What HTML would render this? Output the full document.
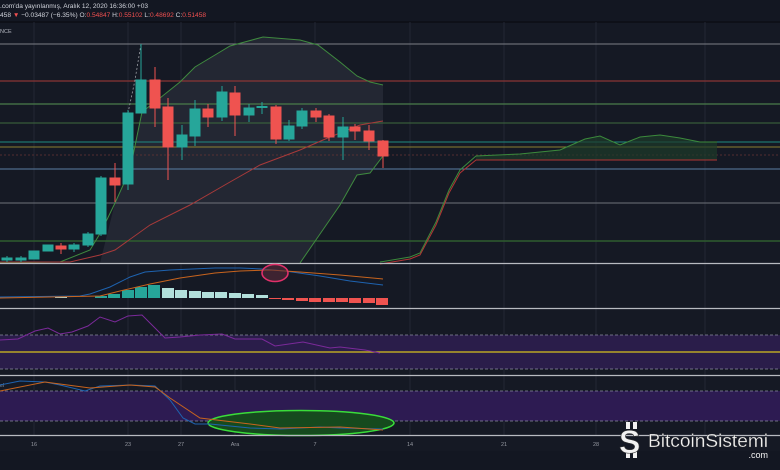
<!DOCTYPE html>
<html><head><meta charset="utf-8"><style>
html,body{margin:0;padding:0;background:#151924;}
body{width:780px;height:470px;overflow:hidden;position:relative;font-family:"Liberation Sans","Noto Sans CJK JP",sans-serif;}
svg{position:absolute;left:0;top:0}
</style></head><body>
<svg width="780" height="470" viewBox="0 0 780 470" xmlns="http://www.w3.org/2000/svg" font-family="Liberation Sans, sans-serif">
<rect width="780" height="470" fill="#151924"/>
<rect width="780" height="22" fill="#131722"/>
<line x1="0" y1="22" x2="780" y2="22" fill="none" stroke="#0c0e14" stroke-width="1.5"/>
<text x="0" y="8" font-size="6.6" fill="#d1d4dc">.com'da yayınlanmış, Aralık 12, 2020 16:36:00 +03</text>
<text x="0" y="17" font-size="6.6" fill="#d1d4dc">458 <tspan fill="#f05050">▼</tspan> −0.03487 (−6.35%) O:<tspan fill="#f05050">0.54847</tspan> H:<tspan fill="#f05050">0.55102</tspan> L:<tspan fill="#f05050">0.48692</tspan> C:<tspan fill="#f05050">0.51458</tspan></text>
<text x="0" y="33" font-size="5.5" fill="#b2b5be">NCE</text>
<g stroke="#222633" stroke-width="1">
<line x1="34" y1="22" x2="34" y2="436"/><line x1="128" y1="22" x2="128" y2="436"/><line x1="181" y1="22" x2="181" y2="436"/><line x1="235" y1="22" x2="235" y2="436"/><line x1="315" y1="22" x2="315" y2="436"/><line x1="410" y1="22" x2="410" y2="436"/><line x1="504" y1="22" x2="504" y2="436"/><line x1="596" y1="22" x2="596" y2="436"/><line x1="705" y1="22" x2="705" y2="436"/>
</g>
<path d="M142,112 L160,98 L180,82 L195,67 L215,55 L230,46 L263,37 L300,40 L318,45 L340,62 L357,76 L370,82 L383,85 L383,156 L370,173 L357,175 L340,205 L320,234 L300,263 L100,263 L115,203 L130,170 Z" fill="#232733"/>
<line x1="0" y1="44" x2="780" y2="44" stroke="#7d7f86" stroke-width="1"/>
<line x1="0" y1="81" x2="780" y2="81" stroke="#8a3535" stroke-width="1.2"/>
<line x1="0" y1="104" x2="780" y2="104" stroke="#4a7d4a" stroke-width="1.2"/>
<line x1="0" y1="123" x2="780" y2="123" stroke="#3e6b3e" stroke-width="1"/>
<line x1="0" y1="142" x2="780" y2="142" stroke="#1f8a80" stroke-width="1"/>
<line x1="0" y1="147" x2="780" y2="147" stroke="#8c8030" stroke-width="1"/>
<line x1="0" y1="155" x2="780" y2="155" stroke="#6a3535" stroke-width="0.8" stroke-dasharray="2,2"/>
<line x1="0" y1="169" x2="780" y2="169" stroke="#5a7fa5" stroke-width="1"/>
<line x1="0" y1="203" x2="780" y2="203" stroke="#6f727a" stroke-width="1"/>
<line x1="0" y1="241" x2="780" y2="241" stroke="#2e5e2e" stroke-width="1.5"/>
<path d="M476,156 L520,154 L560,150 L585,139 L600,136 L620,145 L640,137 L660,135 L680,138 L700,142 L717,142 L717,160 L476,160 Z" fill="#1d3a2a" opacity="0.7"/>
<path d="M380,262 L410,257 L420,253 L436,222 L449,190 L460,170 L476,156 L520,154 L560,150 L585,139 L600,136 L620,145 L640,137 L660,135 L680,138 L700,142 L717,142" fill="none" stroke="#3c8a3c" stroke-width="1"/>
<path d="M380,264 L410,259 L420,255 L436,225 L449,193 L460,173 L476,160 L717,160" fill="none" stroke="#b03535" stroke-width="1"/>
<path d="M0,263 L60,262 L90,250 L101,232 L115,203 L130,170 L142,112 L160,98 L180,82 L195,67 L215,55 L230,46 L263,37 L300,40 L318,45 L340,62 L357,76 L370,82 L383,85" fill="none" stroke="#3f8a3f" stroke-width="1"/>
<path d="M300,263 L320,234 L340,205 L357,175 L370,173 L383,156" fill="none" stroke="#3f8a3f" stroke-width="1"/>
<path d="M0,262 L70,262 L100,255 L115,250 L150,225 L190,205 L230,182 L260,165 L300,150 L330,137 L360,125 L383,121" fill="none" stroke="#a83a3a" stroke-width="1"/>
<path d="M128,113 L135,80 L141,44" fill="none" stroke="#9a9ca3" stroke-width="0.8" stroke-dasharray="2,2"/>
<g stroke-width="1">
<g fill="#26a69a" stroke="#26a69a">
<line x1="7" y1="256" x2="7" y2="262"/><rect x="2" y="258" width="10" height="2"/>
<line x1="21" y1="256" x2="21" y2="262"/><rect x="16" y="258" width="10" height="2"/>
<rect x="29" y="251" width="10" height="8"/>
<rect x="43" y="245" width="10" height="6"/>
<line x1="74" y1="243" x2="74" y2="252"/><rect x="69" y="245" width="10" height="4"/>
<line x1="88" y1="232" x2="88" y2="247"/><rect x="83" y="234" width="10" height="11"/>
<line x1="101" y1="176" x2="101" y2="236"/><rect x="96" y="178" width="10" height="56"/>
<line x1="128" y1="110" x2="128" y2="190"/><rect x="123" y="113" width="10" height="71"/>
<line x1="141" y1="44" x2="141" y2="113"/><rect x="136" y="80" width="10" height="33"/>
<line x1="182" y1="125" x2="182" y2="160"/><rect x="177" y="135" width="10" height="12"/>
<line x1="195" y1="100" x2="195" y2="146"/><rect x="190" y="109" width="10" height="27"/>
<line x1="222" y1="86" x2="222" y2="121"/><rect x="217" y="92" width="10" height="25"/>
<line x1="249" y1="104" x2="249" y2="122"/><rect x="244" y="108" width="10" height="7"/>
<line x1="262" y1="102" x2="262" y2="114"/><rect x="257" y="106.5" width="10" height="1"/>
<line x1="289" y1="120" x2="289" y2="141"/><rect x="284" y="126" width="10" height="13"/>
<line x1="302" y1="108" x2="302" y2="129"/><rect x="297" y="111" width="10" height="15"/>
<line x1="343" y1="117" x2="343" y2="160"/><rect x="338" y="127" width="10" height="10"/>
</g>
<g fill="#ef5350" stroke="#ef5350">
<line x1="61" y1="243" x2="61" y2="254"/><rect x="56" y="246" width="10" height="3"/>
<line x1="115" y1="163" x2="115" y2="202"/><rect x="110" y="178" width="10" height="7"/>
<line x1="155" y1="67" x2="155" y2="127"/><rect x="150" y="80" width="10" height="28"/>
<line x1="168" y1="98" x2="168" y2="180"/><rect x="163" y="107" width="10" height="40"/>
<line x1="208" y1="104" x2="208" y2="127"/><rect x="203" y="109" width="10" height="8"/>
<line x1="235" y1="86" x2="235" y2="136"/><rect x="230" y="93" width="10" height="22"/>
<line x1="276" y1="105" x2="276" y2="144"/><rect x="271" y="107" width="10" height="32"/>
<line x1="316" y1="108" x2="316" y2="122"/><rect x="311" y="111" width="10" height="6"/>
<line x1="329" y1="114" x2="329" y2="141"/><rect x="324" y="116" width="10" height="21"/>
<line x1="355" y1="124" x2="355" y2="140"/><rect x="350" y="127" width="10" height="4"/>
<line x1="369" y1="125" x2="369" y2="150"/><rect x="364" y="131" width="10" height="10"/>
<line x1="383" y1="140" x2="383" y2="168"/><rect x="378" y="141" width="10" height="15"/>
</g>
</g>
<line x1="0" y1="263.5" x2="780" y2="263.5" stroke="#b8bac0" stroke-width="1.2"/>
<line x1="0" y1="308.5" x2="780" y2="308.5" stroke="#b8bac0" stroke-width="1.2"/>
<g fill="#26a69a">
<rect x="95" y="296" width="12" height="2"/><rect x="108" y="294" width="12" height="4"/><rect x="122" y="290" width="12" height="8"/><rect x="135" y="287" width="12" height="11"/><rect x="148" y="285" width="12" height="13"/>
</g>
<g fill="#b2dfdb">
<rect x="55" y="297" width="12" height="1"/><rect x="162" y="288" width="12" height="10"/><rect x="175" y="290" width="12" height="8"/><rect x="189" y="291" width="12" height="7"/><rect x="202" y="292" width="12" height="6"/><rect x="215" y="292" width="12" height="6"/><rect x="229" y="293" width="12" height="5"/><rect x="242" y="294" width="12" height="4"/><rect x="256" y="295" width="12" height="3"/>
</g>
<g fill="#ef5350">
<rect x="269" y="298" width="12" height="1"/><rect x="282" y="298" width="12" height="2"/><rect x="296" y="298" width="12" height="3"/><rect x="309" y="298" width="12" height="4"/><rect x="323" y="298" width="12" height="4"/><rect x="336" y="298" width="12" height="4"/><rect x="349" y="298" width="12" height="5"/><rect x="363" y="298" width="12" height="5"/><rect x="376" y="298" width="12" height="7"/>
</g>
<path d="M0,297 L80,296 L90,294 L110,287 L130,277 L145,272 L170,270 L215,268 L240,268 L262,269 L285,271 L320,276 L350,281 L383,285" fill="none" stroke="#1e63b0" stroke-width="1"/>
<path d="M0,298 L100,296 L120,291 L150,284 L180,278 L215,273 L240,271 L270,270 L300,272 L340,275 L383,279" fill="none" stroke="#c8641e" stroke-width="1"/>
<ellipse cx="275" cy="273" rx="13" ry="8.5" fill="#5a2a3a" fill-opacity="0.6" stroke="#e0306a" stroke-width="1.6"/>
<rect x="0" y="335" width="780" height="34" fill="#2a1d4a"/>
<line x1="0" y1="335" x2="780" y2="335" stroke="#8a8aa0" stroke-dasharray="3,2" stroke-width="0.8"/>
<line x1="0" y1="369" x2="780" y2="369" stroke="#8a8aa0" stroke-dasharray="3,2" stroke-width="0.8"/>
<line x1="0" y1="352" x2="780" y2="352" stroke="#d6c21e" stroke-width="1.3"/>
<path d="M0,340 L18,339 L35,331 L48,328 L60,334 L72,332 L88,326 L100,317 L115,322 L128,316 L142,315 L165,338 L180,337 L200,335 L222,334 L235,339 L262,339 L275,346 L303,342 L330,348 L340,347 L365,350 L380,353" fill="none" stroke="#7b2a9a" stroke-width="1"/>
<line x1="0" y1="375.5" x2="780" y2="375.5" stroke="#b8bac0" stroke-width="1.2"/>
<rect x="0" y="391" width="780" height="30" fill="#2d1b52"/>
<line x1="0" y1="391" x2="780" y2="391" stroke="#8a8aa0" stroke-dasharray="3,2" stroke-width="0.8"/>
<line x1="0" y1="421" x2="780" y2="421" stroke="#8a8aa0" stroke-dasharray="3,2" stroke-width="0.8"/>
<text x="0" y="387" font-size="5" fill="#9598a1">el</text>
<ellipse cx="301" cy="423" rx="93" ry="12.5" fill="#164a1e" stroke="#3adc3a" stroke-width="1.5"/>
<path d="M0,385 L20,381 L45,382 L60,385 L85,391 L100,386 L130,385 L155,386 L170,400 L183,418 L195,424 L210,424 L250,428 L280,429 L300,428 L320,427 L340,428 L383,429" fill="none" stroke="#1e63b0" stroke-width="1"/>
<path d="M0,391 L45,382 L90,388 L130,385 L155,387 L170,398 L200,418 L250,424 L280,428 L340,427 L383,430" fill="none" stroke="#c8641e" stroke-width="1"/>
<line x1="0" y1="435.5" x2="780" y2="435.5" stroke="#b8bac0" stroke-width="1.2"/>
<rect x="0" y="437" width="780" height="14" fill="#151924"/>
<rect x="0" y="451" width="780" height="19" fill="#131722"/>
<g font-size="5.5" fill="#9598a1" text-anchor="middle">
<text x="34" y="446">16</text><text x="128" y="446">23</text><text x="181" y="446">27</text><text x="235" y="446">Ara</text><text x="315" y="446">7</text><text x="410" y="446">14</text><text x="504" y="446">21</text><text x="596" y="446">28</text>
</g>
<g>
<rect x="626" y="422" width="4" height="7" fill="#f2f2f2"/><rect x="633" y="422" width="4" height="7" fill="#f2f2f2"/>
<rect x="626" y="451" width="4" height="7" fill="#f2f2f2"/><rect x="633" y="451" width="4" height="7" fill="#f2f2f2"/>
<text x="619" y="453" font-size="32" font-weight="bold" fill="#f2f2f2" stroke="#333" stroke-width="0.6">S</text>
<text x="648" y="447" font-size="18.5" fill="#f2f2f2" stroke="#333" stroke-width="0.3" textLength="120" lengthAdjust="spacingAndGlyphs">BitcoinSistemi</text>
<text x="768" y="458" font-size="9" fill="#f2f2f2" text-anchor="end">.com</text>
</g>
</svg>
</body></html>
